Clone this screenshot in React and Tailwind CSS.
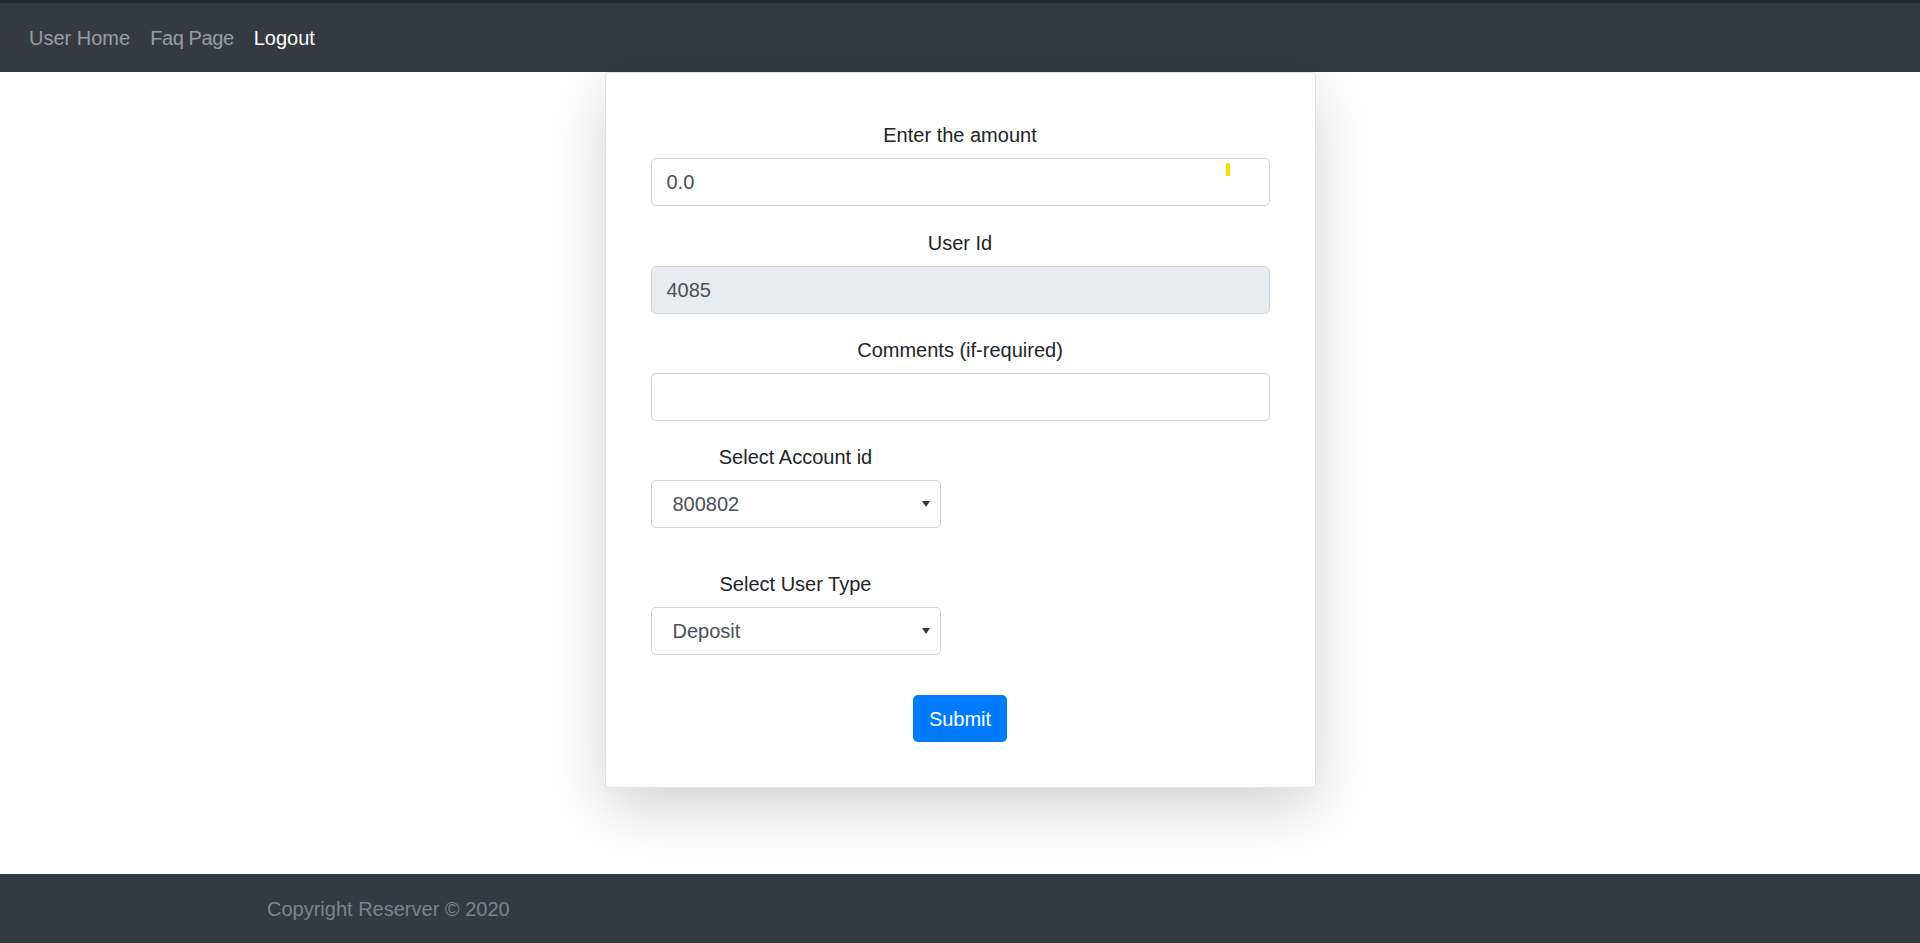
import React from 'react';

const font = { fontFamily: '"Liberation Sans", Arial, sans-serif' };

function Caret() {
  return (
    <svg width="8" height="6" viewBox="0 0 8 6" className="absolute right-[10px] top-1/2 -translate-y-1/2">
      <path d="M0 0 L8 0 L4 6 Z" fill="#343a40" />
    </svg>
  );
}

function SelectBox({ label, value }) {
  return (
    <div className="w-[290px]">
      <div className="text-center text-[20px] leading-[30px] text-[#212529] mb-[8px]">{label}</div>
      <div className="relative h-[48px] rounded-[5px] border border-[#ced4da] bg-white flex items-center pl-[21px] text-[20px] text-[#495057]">
        {value}
        <Caret />
      </div>
    </div>
  );
}

export default function App() {
  return (
    <div className="min-h-screen flex flex-col bg-white" style={font}>
      {/* Navbar */}
      <nav className="h-[72px] bg-[#343a40] border-t-[3px] border-[#24272b] flex items-center px-[19px]">
        <a className="px-[10px] text-[20px] text-white/50">User Home</a>
        <a className="px-[10px] text-[20px] text-white/50 tracking-[-0.4px]">Faq Page</a>
        <a className="px-[10px] text-[20px] text-white">Logout</a>
      </nav>

      {/* Main */}
      <main className="flex-1">
        <div className="w-[711px] mx-auto bg-white border border-black/[0.125] rounded-[5px] shadow-[0_20px_60px_rgba(0,0,0,0.175)] px-[45px] pt-[47px] pb-[45px]">
          <div className="text-center text-[20px] leading-[30px] text-[#212529] mb-[8px]">Enter the amount</div>
          <div className="relative h-[48px] rounded-[5px] border border-[#ced4da] bg-white flex items-center px-[15px] text-[20px] text-[#495057] mb-[22px]">
            0.0
            <span className="absolute left-[574px] top-[4px] w-[4px] h-[13px] bg-[#f6e000]"></span>
          </div>

          <div className="text-center text-[20px] leading-[30px] text-[#212529] mb-[8px]">User Id</div>
          <div className="h-[48px] rounded-[5px] border border-[#ced4da] bg-[#e9ecef] flex items-center px-[15px] text-[20px] text-[#495057] mb-[21px]">
            4085
          </div>

          <div className="text-center text-[20px] leading-[30px] text-[#212529] mb-[8px]">Comments (if-required)</div>
          <div className="h-[48px] rounded-[5px] border border-[#ced4da] bg-white mb-[21px]"></div>

          <SelectBox label="Select Account id" value="800802" />
          <div className="h-[41px]"></div>
          <SelectBox label="Select User Type" value="Deposit" />

          <div className="flex justify-center mt-[40px]">
            <button className="h-[47px] px-[16px] rounded-[5px] bg-[#007bff] text-white text-[20px]">Submit</button>
          </div>
        </div>
      </main>

      {/* Footer */}
      <footer className="h-[69px] bg-[#343a40] flex items-center pl-[267px]">
        <span className="text-[20px] text-[#7d848b]">Copyright Reserver © 2020</span>
      </footer>
    </div>
  );
}
